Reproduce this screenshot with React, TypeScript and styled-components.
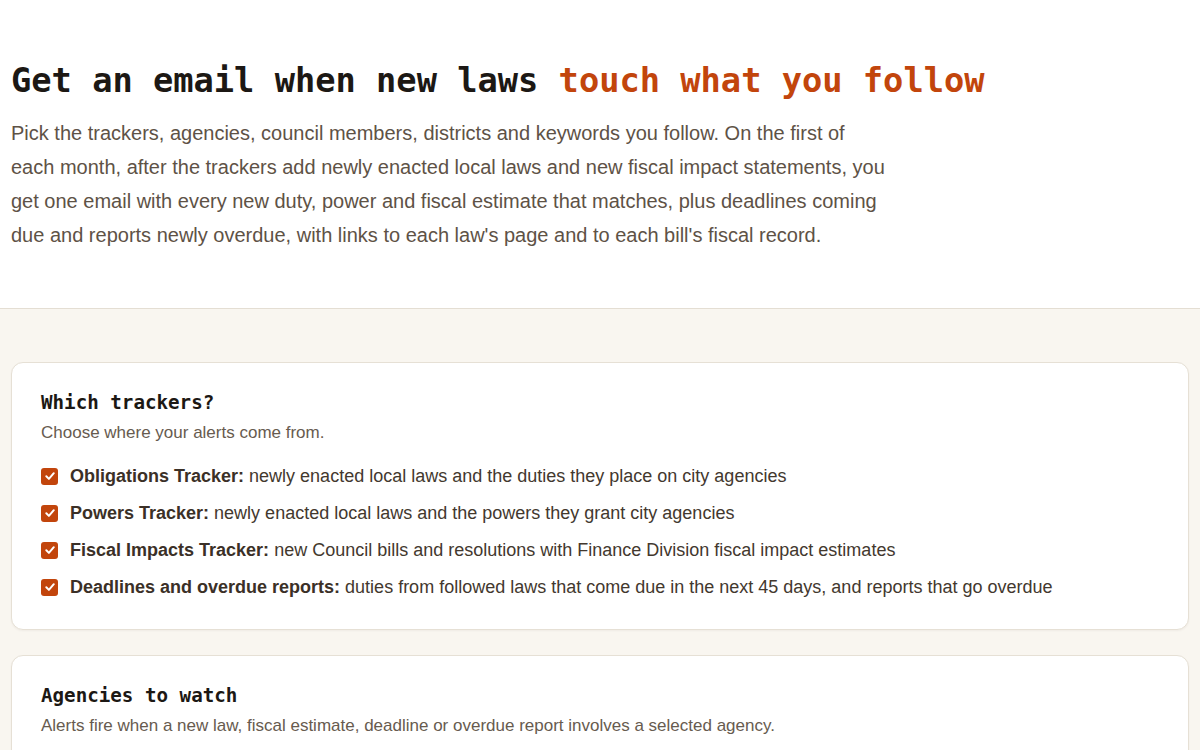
import React from 'react';
import styled, {createGlobalStyle} from 'styled-components';

const GlobalStyle = createGlobalStyle`
  html, body {
    margin: 0;
    padding: 0;
    background: #ffffff;
  }
  body {
    font-family: 'Liberation Sans', Arial, sans-serif;
    color: #3b3129;
  }
`;

type Tracker = {
  name: string;
  text: string;
};

const trackers: Tracker[] = [
  {name: 'Obligations Tracker:', text: 'newly enacted local laws and the duties they place on city agencies'},
  {name: 'Powers Tracker:', text: 'newly enacted local laws and the powers they grant city agencies'},
  {name: 'Fiscal Impacts Tracker:', text: 'new Council bills and resolutions with Finance Division fiscal impact estimates'},
  {
    name: 'Deadlines and overdue reports:',
    text: 'duties from followed laws that come due in the next 45 days, and reports that go overdue',
  },
];

function CheckBox() {
  return (
    <Page.Box>
      <svg width="12" height="12" viewBox="0 0 12 12" fill="none">
        <path d="M2.3 6.3 L4.9 8.9 L9.8 3.2" stroke="#fff" strokeWidth="2" strokeLinecap="round" strokeLinejoin="round" />
      </svg>
    </Page.Box>
  );
}

export default function App() {
  return (
    <>
      <GlobalStyle />
      <Page.Header>
        <Page.Title>
          Get an email when new laws <Page.Accent>touch what you follow</Page.Accent>
        </Page.Title>
        <Page.Lead>
          Pick the trackers, agencies, council members, districts and keywords you follow. On the first of each month,
          after the trackers add newly enacted local laws and new fiscal impact statements, you get one email with every
          new duty, power and fiscal estimate that matches, plus deadlines coming due and reports newly overdue, with
          links to each law's page and to each bill's fiscal record.
        </Page.Lead>
      </Page.Header>
      <Page.Band>
        <Page.Card>
          <Page.CardTitle>Which trackers?</Page.CardTitle>
          <Page.CardNote>Choose where your alerts come from.</Page.CardNote>
          <Page.List>
            {trackers.map((t) => (
              <Page.Option key={t.name}>
                <CheckBox />
                <span>
                  <strong>{t.name}</strong> {t.text}
                </span>
              </Page.Option>
            ))}
          </Page.List>
        </Page.Card>
        <Page.Card>
          <Page.CardTitle>Agencies to watch</Page.CardTitle>
          <Page.CardNote>
            Alerts fire when a new law, fiscal estimate, deadline or overdue report involves a selected agency.
          </Page.CardNote>
          <Page.List>
            <Page.Option>&nbsp;</Page.Option>
            <Page.Option>&nbsp;</Page.Option>
          </Page.List>
        </Page.Card>
      </Page.Band>
    </>
  );
}

const Page = {
  Header: styled.header`
    padding: 59px 12px 56px 11px;
    border-bottom: 1px solid #e4ded3;
  `,
  Title: styled.h1`
    margin: 0 0 13px;
    font-family: 'DejaVu Sans Mono', 'Liberation Mono', monospace;
    font-size: 33.7px;
    font-weight: 700;
    line-height: 44px;
    letter-spacing: 0;
    color: #1c1814;
  `,
  Accent: styled.span`
    color: #c2450c;
  `,
  Lead: styled.p`
    margin: 0;
    max-width: 878px;
    font-size: 20px;
    line-height: 34px;
    color: #5e5246;
  `,
  Band: styled.main`
    background: #f9f6f0;
    padding: 53px 11px 40px;
    display: flex;
    flex-direction: column;
    gap: 25px;
  `,
  Card: styled.section`
    background: #ffffff;
    border: 1px solid #e6e0d5;
    border-radius: 12px;
    padding: 27px 29px 29px;
    box-shadow: 0 1px 2px rgba(60, 45, 30, 0.05);
  `,
  CardTitle: styled.h2`
    margin: 0;
    font-family: 'DejaVu Sans Mono', 'Liberation Mono', monospace;
    font-size: 19.2px;
    font-weight: 700;
    line-height: 26px;
    color: #1c1814;
  `,
  CardNote: styled.p`
    margin: 5px 0 0;
    font-size: 17px;
    line-height: 24px;
    color: #675b4f;
  `,
  List: styled.div`
    margin-top: 18px;
    display: flex;
    flex-direction: column;
    gap: 11px;
  `,
  Option: styled.label`
    display: flex;
    align-items: center;
    gap: 12px;
    font-size: 18px;
    line-height: 26px;
    color: #43382e;
    strong {
      font-weight: 700;
      color: #3b3027;
    }
  `,
  Box: styled.span`
    flex: none;
    width: 17px;
    height: 17px;
    border-radius: 3px;
    background: #c2450c;
    display: flex;
    align-items: center;
    justify-content: center;
  `,
};
